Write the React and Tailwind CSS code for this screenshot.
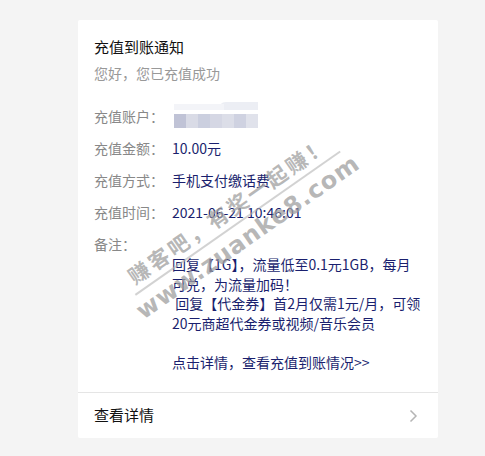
import React from "react";

const rows = [
  { label: "充值金额：", value: "10.00元" },
  { label: "充值方式：", value: "手机支付缴话费" },
  { label: "充值时间：", value: "2021-06-21 10:46:01" },
];

const pixels = ["#c0c3d6", "#d9dbe6", "#cbcfdf", "#d5d7e4", "#dcdee8", "#cfd2e1", "#e0e2eb"];

const Masked = () => (
  <div className="relative h-5 w-[84px] blur-[0.5px]">
    <div className="absolute right-0 top-[-4px] h-[8px] w-[40px] rounded-tl-full bg-[#eceef4]" />
    <div className="absolute left-0 top-[-2px] h-[6px] w-[50px] bg-[#f3f4f8]" />
    <div className="absolute inset-x-0 bottom-[-2px] flex">
      {pixels.map((c, i) => (
        <div key={i} className="h-[14px] flex-1" style={{ backgroundColor: c }} />
      ))}
    </div>
  </div>
);

// diagonal watermark laid over the card
const Watermark = () => (
  <div className="pointer-events-none absolute left-[160px] top-[203px] -translate-x-1/2 -translate-y-1/2 -rotate-[35deg] flex flex-col items-center text-[#a0a0a0]/75 font-bold whitespace-nowrap">
    <p className="text-[21px] leading-[26px] tracking-[3px]">赚客吧，有奖一起赚！</p>
    <div className="w-[250px] h-[2px] bg-[#b4b4b4]/60 my-[3px]" />
    <p className="text-[24px] leading-[26px] tracking-[1px] font-['DejaVu_Sans',sans-serif]">www.zuanke8.com</p>
  </div>
);

export default function App() {
  return (
    <div className="min-h-[456px] w-[485px] bg-[#f4f4f4] pt-5 pl-[78px] font-['Microsoft_YaHei','Noto_Sans_CJK_SC',sans-serif] text-[14px]">
      <div className="relative w-[360px] overflow-hidden rounded-[2px] bg-white">
        <div className="px-4 pt-[17px] pb-5">
          <h1 className="text-[15px] leading-5 text-[#111]">充值到账通知</h1>
          <p className="mt-[6px] leading-5 text-[#999]">您好，您已充值成功</p>

          <div className="mt-[23px] flex flex-col gap-3">
            <div className="flex h-5 items-center">
              <span className="w-[80px] text-[#888]">充值账户：</span>
              <Masked />
            </div>
            {rows.map((r) => (
              <div key={r.label} className="flex h-5 items-center">
                <span className="w-[78px] text-[#888]">{r.label}</span>
                <span className="text-[#1a1f6e]">{r.value}</span>
              </div>
            ))}
            <div className="flex h-5 items-center">
              <span className="text-[#888]">备注：</span>
            </div>
          </div>

          <div className="ml-[78px] mt-[1px] leading-[19.5px] text-[#1a1f6e]">
            <p>回复【1G】，流量低至0.1元1GB，每月可兑，为流量加码！</p>
            <p>&nbsp;回复【代金券】首2月仅需1元/月，可领20元商超代金券或视频/音乐会员</p>
            <p>&nbsp;</p>
            <p>点击详情，查看充值到账情况&gt;&gt;</p>
          </div>
        </div>

        <div className="flex h-[46px] items-center justify-between border-t border-[#e5e5e5] pl-4 pr-5">
          <span className="text-[15px] text-[#111]">查看详情</span>
          <svg width="9" height="14" viewBox="0 0 9 14" fill="none">
            <path d="M1.5 1.5 7 7l-5.5 5.5" stroke="#b5b5b5" strokeWidth="1.5" />
          </svg>
        </div>

        <Watermark />
      </div>
    </div>
  );
}
